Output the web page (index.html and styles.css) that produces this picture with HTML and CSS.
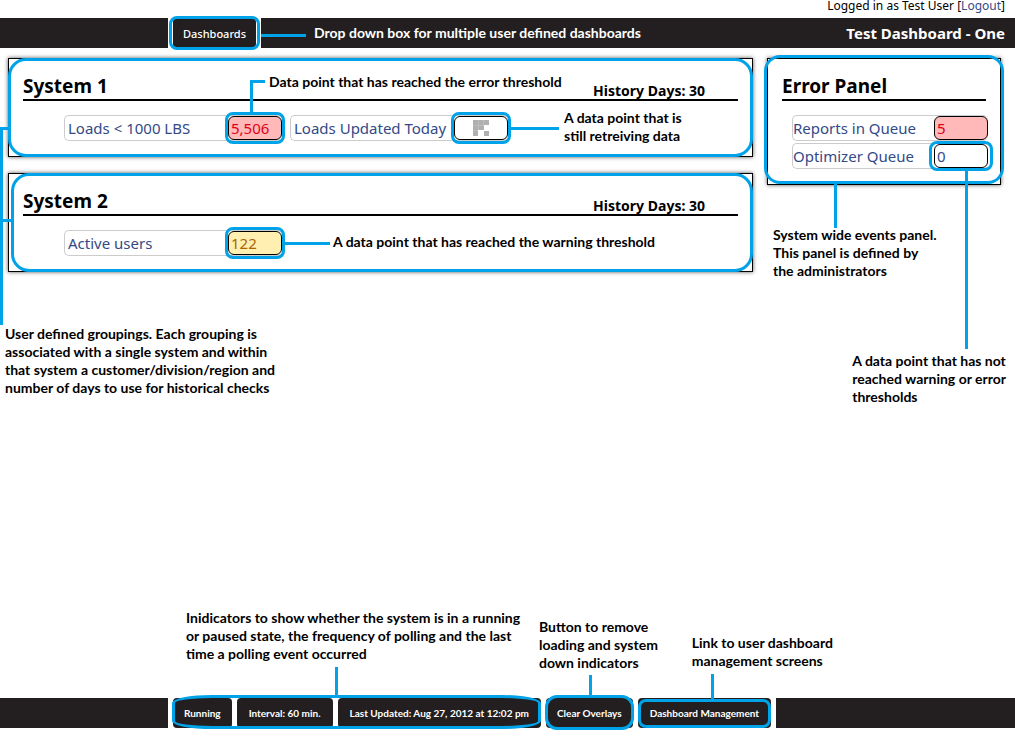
FILE: index.html
```html
<!DOCTYPE html>
<html lang="en">
<head>
<meta charset="utf-8">
<title>Test Dashboard - One</title>
<link rel="stylesheet" href="styles.css">
</head>
<body>
<div class="page">
  <header>
    <div class="session">Logged in as Test User [<a href="#">Logout</a>]</div>
    <div class="bar">
      <div class="bar-start"></div>
      <div class="anchor">
        <button class="menu-button" type="button">Dashboards</button>
        <span class="ring ring-menu"></span>
      </div>
      <div class="bar-fill top-fill">
        <span class="line line-menu"></span>
        <span class="menu-note">Drop down box for multiple user defined dashboards</span>
        <h1>Test Dashboard - One</h1>
      </div>
    </div>
  </header>

  <main>
    <div class="systems">
      <section class="panel">
        <div class="panel-head">
          <h2>System 1</h2>
          <span class="history">History Days: 30</span>
        </div>
        <div class="fields">
          <div class="field">
            <span class="label">Loads &lt; 1000 LBS</span>
            <div class="value error">5,506
              <span class="ring ring-value"></span>
              <span class="line error-stem"></span>
              <span class="line error-arm"></span>
              <p class="note note-error">Data point that has reached the error threshold</p>
            </div>
          </div>
          <div class="field">
            <span class="label">Loads Updated Today</span>
            <div class="value loading">
              <svg width="16" height="16" viewBox="0 0 16 16" role="img" aria-label="Loading">
                <path fill="#b0b0b0" d="M0 0h16v5H0zM0 5h11v5H0zM0 10h5v6H0zM11 11h5v5h-5z"/>
                <path stroke="#bdbdbd" fill="none" d="M5.500 0v10M10.500 0v5M0 5.500h11M0 10.500h5"/>
              </svg>
              <span class="ring ring-value"></span>
              <span class="line value-line loading-line"></span>
              <p class="note note-loading">A data point that is<br>still retreiving data</p>
            </div>
          </div>
        </div>
        <span class="ring ring-panel"></span>
        <span class="line group-arm"></span>
      </section>

      <section class="panel">
        <div class="panel-head">
          <h2>System 2</h2>
          <span class="history">History Days: 30</span>
        </div>
        <div class="fields">
          <div class="field">
            <span class="label">Active users</span>
            <div class="value warning">122
              <span class="ring ring-value"></span>
              <span class="line value-line"></span>
              <p class="note note-warning">A data point that has reached the warning threshold</p>
            </div>
          </div>
        </div>
        <span class="ring ring-panel ring-second"></span>
        <span class="line group-arm group-arm-second"></span>
      </section>
      <span class="line group-stem"></span>
      <p class="note note-group">User defined groupings. Each grouping is<br>associated with a single system and within<br>that system a customer/division/region and<br>number of days to use for historical checks</p>
    </div>

    <aside class="panel errors">
      <div class="panel-head"><h2>Error Panel</h2></div>
      <div class="fields">
        <div class="field">
          <span class="label">Reports in Queue</span>
          <div class="value error">5</div>
        </div>
        <div class="field">
          <span class="label">Optimizer Queue</span>
          <div class="value">0
            <span class="ring ring-value ring-normal"></span>
            <span class="line normal-stem"></span>
            <p class="note note-normal">A data point that has not<br>reached warning or error<br>thresholds</p>
          </div>
        </div>
      </div>
      <span class="ring ring-errors"></span>
      <span class="line errors-stem"></span>
      <p class="note note-errors">System wide events panel.<br>This panel is defined by<br>the administrators</p>
    </aside>
  </main>

  <footer class="bar bottom">
    <div class="bar-start"></div>
    <div class="anchor status">
      <span class="chip">Running</span>
      <span class="chip wide">Interval: 60 min.</span>
      <span class="chip wide">Last Updated: Aug 27, 2012 at 12:02 pm</span>
      <span class="ring ring-status"></span>
      <span class="line status-stem"></span>
      <p class="note note-status">Inidicators to show whether the system is in a running<br>or paused state, the frequency of polling and the last<br>time a polling event occurred</p>
    </div>
    <div class="anchor">
      <button class="chip" type="button">Clear Overlays</button>
      <span class="ring ring-clear"></span>
      <span class="line clear-stem"></span>
      <p class="note note-clear">Button to remove<br>loading and system<br>down indicators</p>
    </div>
    <div class="anchor">
      <a class="chip wide" href="#">Dashboard Management</a>
      <span class="ring ring-manage"></span>
      <span class="line manage-stem"></span>
      <p class="note note-manage">Link to user dashboard<br>management screens</p>
    </div>
    <div class="bar-fill"></div>
  </footer>
</div>
</body>
</html>
```
FILE: styles.css
```css
* { box-sizing: border-box; }

body {
  margin: 0;
  background: #fff;
  color: #000;
  font-family: "Noto Sans", "Open Sans", sans-serif;
}

h1, h2, p { margin: 0; }

.page {
  display: flex;
  flex-direction: column;
  min-height: 100vh;
  padding-bottom: 16px;
}

.session {
  padding: 0 10px 6px;
  font-size: 12px;
  line-height: 12px;
  text-align: right;
}

.session a { color: #334a87; text-decoration: none; }

/* Dark bars */
.bar { display: flex; gap: 5px; height: 30px; }
.bar-start { width: 168px; background: #231f20; }
.bar-fill { flex: 1; background: #231f20; }
.anchor { position: relative; display: flex; gap: 5px; }

.top-fill {
  display: flex;
  align-items: center;
  padding-right: 10px;
  color: #fff;
}

.menu-button, .chip {
  display: flex;
  align-items: center;
  padding: 0 10px;
  border: 0;
  border-radius: 4px;
  background: #231f20;
  color: #fff;
  font-family: inherit;
  text-decoration: none;
  white-space: nowrap;
}

.menu-button { font-size: 11px; font-weight: 500; }

.chip {
  padding: 0 11px;
  font-family: "Lato", sans-serif;
  font-size: 10px;
  font-weight: 700;
}

.wide { padding: 0 12px; }

h1 { margin-left: auto; font-size: 15px; }

.menu-note, .note {
  font-family: "Lato", sans-serif;
  font-size: 14px;
  font-weight: 700;
  line-height: 18px;
  white-space: nowrap;
}

/* Panels */
main {
  flex: 1;
  display: flex;
  align-items: flex-start;
  gap: 14px;
  padding: 10px 14px 0 8px;
}

.systems {
  position: relative;
  flex: 1;
  display: flex;
  flex-direction: column;
  gap: 16px;
}

.panel {
  position: relative;
  padding: 14px 14px 15px;
  border: 1px solid #000;
  box-shadow: 0 0 4px #555;
}

.errors { width: 234px; }

.panel-head {
  display: flex;
  align-items: flex-end;
  justify-content: space-between;
  height: 28px;
  border-bottom: 2px solid #000;
}

h2 { font-size: 19px; line-height: 26px; }

.history {
  padding-right: 33px;
  font-size: 14px;
  font-weight: 700;
  line-height: 16px;
}

.fields {
  display: flex;
  flex-wrap: wrap;
  gap: 2px 8px;
  padding: 14px 0 0 41px;
}

.errors .fields { padding-left: 10px; margin-right: -2px; }
.errors .field { width: 100%; }

.field {
  display: flex;
  align-items: center;
  justify-content: space-between;
  width: 218px;
  height: 26px;
  padding-left: 3px;
  border: 1px solid #ccc;
  border-right: 0;
  border-radius: 5px;
}

.errors .field { padding-left: 0; }

.label {
  color: #334a87;
  font-size: 15px;
  line-height: 24px;
  white-space: nowrap;
}

.value {
  position: relative;
  width: 54px;
  height: 24px;
  padding-left: 2px;
  border: 1px solid #000;
  border-radius: 6px;
  background: #fff;
  color: #334a87;
  font-size: 15px;
  line-height: 22px;
}

.error { background: #ffb9b9; color: #e00016; }
.warning { background: #ffefb0; color: #a86400; }

.loading {
  display: flex;
  align-items: center;
  justify-content: center;
  padding: 0;
}

/* Annotation rings, leader lines and captions */
.ring {
  position: absolute;
  border: 3px solid #00a2e8;
  border-radius: 8px;
  pointer-events: none;
}

.line { position: absolute; background: #00a2e8; }
.note { position: absolute; color: #000; }

.ring-menu { inset: -2px -4px; }
.ring-value { inset: -5px -4px; }
.ring-normal { inset: -4px -6px; }
.ring-panel { inset: -1px; border-radius: 18px; }
.ring-second { left: 2px; }
.ring-errors { inset: -4px -4px 0; border-radius: 16px; }
.ring-status { inset: -3px 0 -1px -1px; border-radius: 40px / 8px; }
.ring-clear { inset: -3px -1px -2px; border-radius: 12px; }
.ring-manage { inset: 1px 0 0; }

.top-fill { position: relative; }
.line-menu { left: 0; top: 16px; width: 45px; height: 3px; }
.menu-note { margin-left: 53px; }

.error-stem { left: 21px; bottom: 26px; width: 3px; height: 32px; }
.error-arm { left: 21px; bottom: 56px; width: 15px; height: 3px; }
.note-error { left: 40px; bottom: 48px; }
.value-line { left: 56px; top: 10px; width: 45px; height: 3px; }
.loading-line { width: 48px; }
.note-loading { left: 109px; top: -8px; }
.note-warning { left: 104px; top: 1px; }

.group-arm { left: -9px; top: 68px; width: 9px; height: 3px; }
.group-arm-second { top: 45px; width: 13px; }
.group-stem { left: -8px; top: 69px; width: 3px; height: 198px; }
.note-group { left: -3px; top: 267px; }

.normal-stem { left: 30px; top: 24px; width: 3px; height: 180px; }
.note-normal { right: -19px; top: 207px; }
.errors-stem { left: 66px; top: 125px; width: 3px; height: 44px; }
.note-errors { left: 5px; top: 167px; }

.status-stem { left: 162px; bottom: 31px; width: 3px; height: 30px; }
.note-status { left: 13px; bottom: 65px; }
.clear-stem { left: 43px; bottom: 31px; width: 3px; height: 22px; }
.note-clear { left: -7px; bottom: 56px; }
.manage-stem { left: 73px; bottom: 28px; width: 3px; height: 26px; }
.note-manage { left: 54px; bottom: 58px; }
```
